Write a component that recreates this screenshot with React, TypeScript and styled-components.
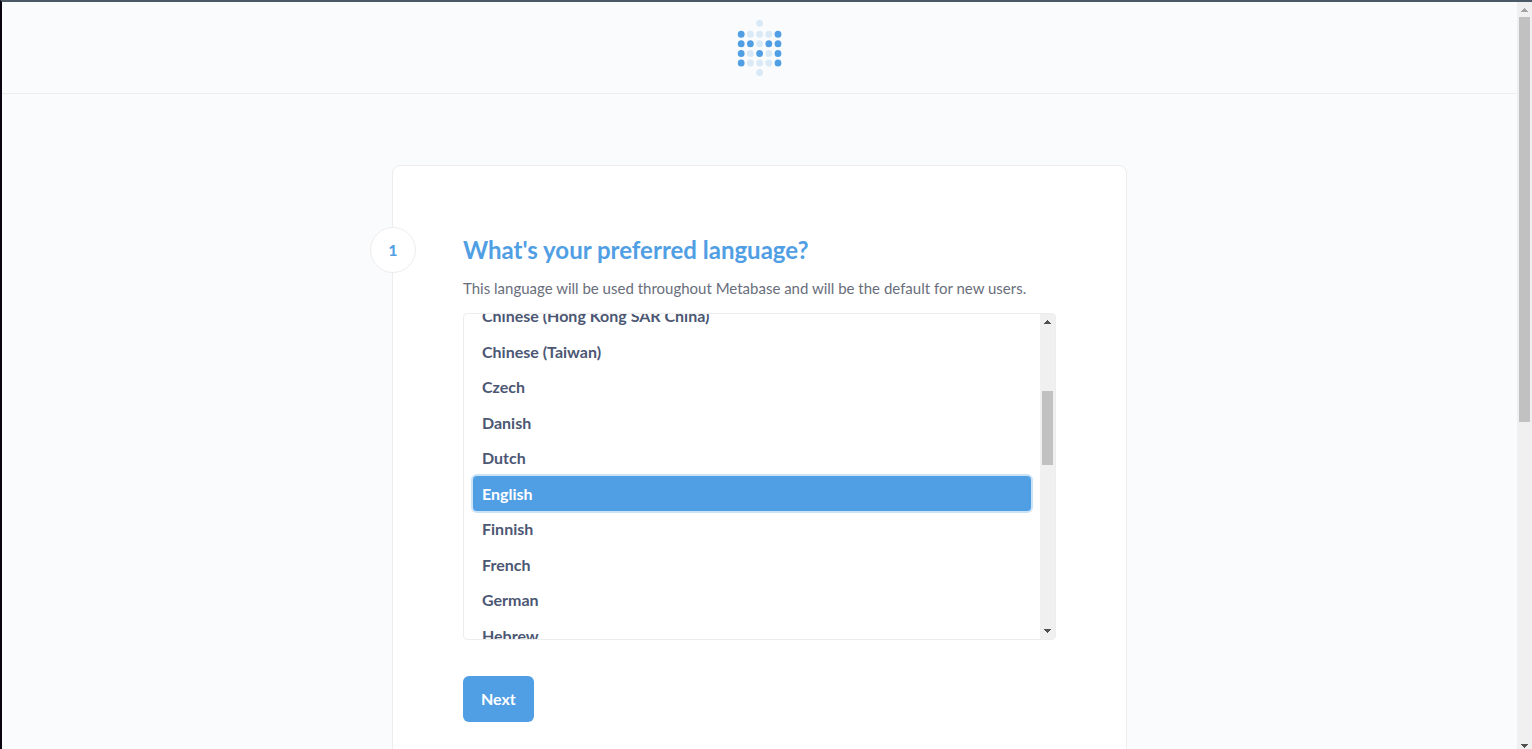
import React, { useLayoutEffect, useRef, useState } from "react";
import styled, { createGlobalStyle } from "styled-components";

const GlobalStyle = createGlobalStyle`
  *, *::before, *::after { box-sizing: border-box; }
  body {
    margin: 0;
    color: #4c5773;
    background: #fafbfd;
    font-family: Lato, "Liberation Sans", sans-serif;
    font-size: 16px;
  }
`;

const Frame = styled.div`
  display: flex;
  height: 100vh;
  border-top: 2px solid #4a5965;
  border-left: 2px solid #0a0410;
  background: #fafbfd;
`;

const Page = styled.div`
  flex: 1;
  min-width: 0;
  overflow-y: auto;
  scrollbar-width: none;
`;

const Header = styled.header`
  display: flex;
  align-items: center;
  justify-content: center;
  height: 92px;
  border-bottom: 1px solid #eeecec;
`;

const Main = styled.main`
  padding: 71px 24px;
`;

const Card = styled.section`
  position: relative;
  max-width: 735px;
  margin: 0 auto;
  padding: 70px;
  border: 1px solid #eeecec;
  border-radius: 8px;
  background: #fff;
`;

const StepNumber = styled.div`
  position: absolute;
  top: 61px;
  left: -23px;
  display: flex;
  align-items: center;
  justify-content: center;
  width: 46px;
  height: 46px;
  padding-bottom: 2px;
  border: 1px solid #eeecec;
  border-radius: 50%;
  background: #fff;
  color: #509ee3;
  font-weight: 700;
`;

const Title = styled.h1`
  margin: 0;
  color: #509ee3;
  font-size: 24px;
  font-weight: 700;
  line-height: 28px;
`;

const Description = styled.p`
  margin: 12px 0 13px;
  color: #696e7b;
  font-size: 15px;
  line-height: 24px;
`;

const Picker = styled.div`
  display: flex;
  height: 327px;
  overflow: hidden;
  border: 1px solid #eeecec;
  border-radius: 4px;
`;

const Options = styled.div`
  flex: 1;
  overflow-y: auto;
  scrollbar-width: none;
`;

const OptionStack = styled.div`
  display: flex;
  flex-direction: column;
  height: 355px;
  padding: 0 9px;
`;

const Option = styled.label<{ $selected: boolean }>`
  display: flex;
  flex: 1;
  align-items: center;
  padding: 0 9px;
  border-radius: 4px;
  color: ${(p) => (p.$selected ? "#fff" : "#4c5773")};
  background: ${(p) => (p.$selected ? "#509ee3" : "transparent")};
  box-shadow: ${(p) => (p.$selected ? "0 0 0 2px #cbe2f7" : "none")};
  font-weight: 700;
  cursor: pointer;
`;

const Radio = styled.input`
  appearance: none;
  width: 0;
  height: 0;
  margin: 0;
  outline: none;
`;

const NextButton = styled.button`
  display: block;
  height: 46px;
  margin-top: 36px;
  padding: 0 18px 2px;
  border: 0;
  border-radius: 6px;
  background: #509ee3;
  color: #fff;
  font: inherit;
  font-weight: 700;
  cursor: pointer;
`;

const Track = styled.div`
  display: flex;
  flex: none;
  flex-direction: column;
  align-items: center;
  width: 15px;
  padding-right: 1px;
  background: #f0f0f0;
`;

const Lane = styled.div`
  display: flex;
  flex: 1;
  flex-direction: column;
  align-self: stretch;
  padding: 0 1px 0 2px;
`;

const Space = styled.div<{ $grow: number }>`
  flex: ${(p) => p.$grow} 0 0;
`;

const Thumb = styled(Space)`
  background: #c1c1c1;
`;

const Arrow = styled.svg`
  display: block;
  flex: none;
`;

interface ScrollbarProps {
  before: number;
  size: number;
  after: number;
  endHeight: number;
  atTop?: boolean;
}

function Scrollbar({ before, size, after, endHeight, atTop }: ScrollbarProps) {
  return (
    <Track aria-hidden="true">
      <Arrow width="13" height="15" shapeRendering="crispEdges" fill={atTop ? "#a3a3a3" : "#505050"}>
        <path d="M6 6h1v1h1v1h1v1h1v1H3V9h1V8h1V7h1z" />
      </Arrow>
      <Lane>
        <Space $grow={before} />
        <Thumb $grow={size} />
        <Space $grow={after} />
      </Lane>
      <Arrow width="13" height={endHeight} shapeRendering="crispEdges" fill="#505050">
        <path d="M3 5h7v1H9v1H8v1H7v1H6V8H5V7H4V6H3z" />
      </Arrow>
    </Track>
  );
}

const columns = [4.2, 13.4, 22.6, 31.8, 41];
const logoRows = [
  { y: 4.2, dots: "  o  " },
  { y: 15.2, dots: "XoooX" },
  { y: 24.8, dots: "XXoXX" },
  { y: 34.4, dots: "XoXoX" },
  { y: 44, dots: "XoooX" },
  { y: 53.5, dots: "  o  " },
];

function Logo() {
  return (
    <svg width="45" height="57" viewBox="0 0 45 57" role="img" aria-label="Metabase">
      {logoRows.map((row) =>
        columns.map((x, i) =>
          row.dots[i] === " " ? null : (
            <ellipse
              key={`${x}-${row.y}`}
              cx={x}
              cy={row.y}
              rx="3.4"
              ry="3.5"
              fill={row.dots[i] === "X" ? "#509ee3" : "#d9e9f6"}
            />
          ),
        ),
      )}
    </svg>
  );
}

const languages = [
  "Chinese (Hong Kong SAR China)",
  "Chinese (Taiwan)",
  "Czech",
  "Danish",
  "Dutch",
  "English",
  "Finnish",
  "French",
  "German",
  "Hebrew",
];

export default function App() {
  const [language, setLanguage] = useState("English");
  const optionsRef = useRef<HTMLDivElement>(null);

  useLayoutEffect(() => {
    if (optionsRef.current) optionsRef.current.scrollTop = 16;
  }, []);

  return (
    <>
      <GlobalStyle />
      <Frame>
        <Page>
          <Header>
            <Logo />
          </Header>
          <Main>
            <Card>
              <StepNumber>1</StepNumber>
              <Title id="language-title">What's your preferred language?</Title>
              <Description>
                This language will be used throughout Metabase and will be the default for new users.
              </Description>
              <Picker>
                <Options ref={optionsRef} role="radiogroup" aria-labelledby="language-title">
                  <OptionStack>
                    {languages.map((name) => (
                      <Option key={name} $selected={name === language}>
                        <Radio
                          type="radio"
                          name="language"
                          value={name}
                          checked={name === language}
                          onChange={() => setLanguage(name)}
                        />
                        {name}
                      </Option>
                    ))}
                  </OptionStack>
                </Options>
                <Scrollbar before={62} size={74} after={159} endHeight={15} />
              </Picker>
              <NextButton type="button">Next</NextButton>
            </Card>
          </Main>
        </Page>
        <Scrollbar before={0} size={405} after={317} endHeight={10} atTop />
      </Frame>
    </>
  );
}
